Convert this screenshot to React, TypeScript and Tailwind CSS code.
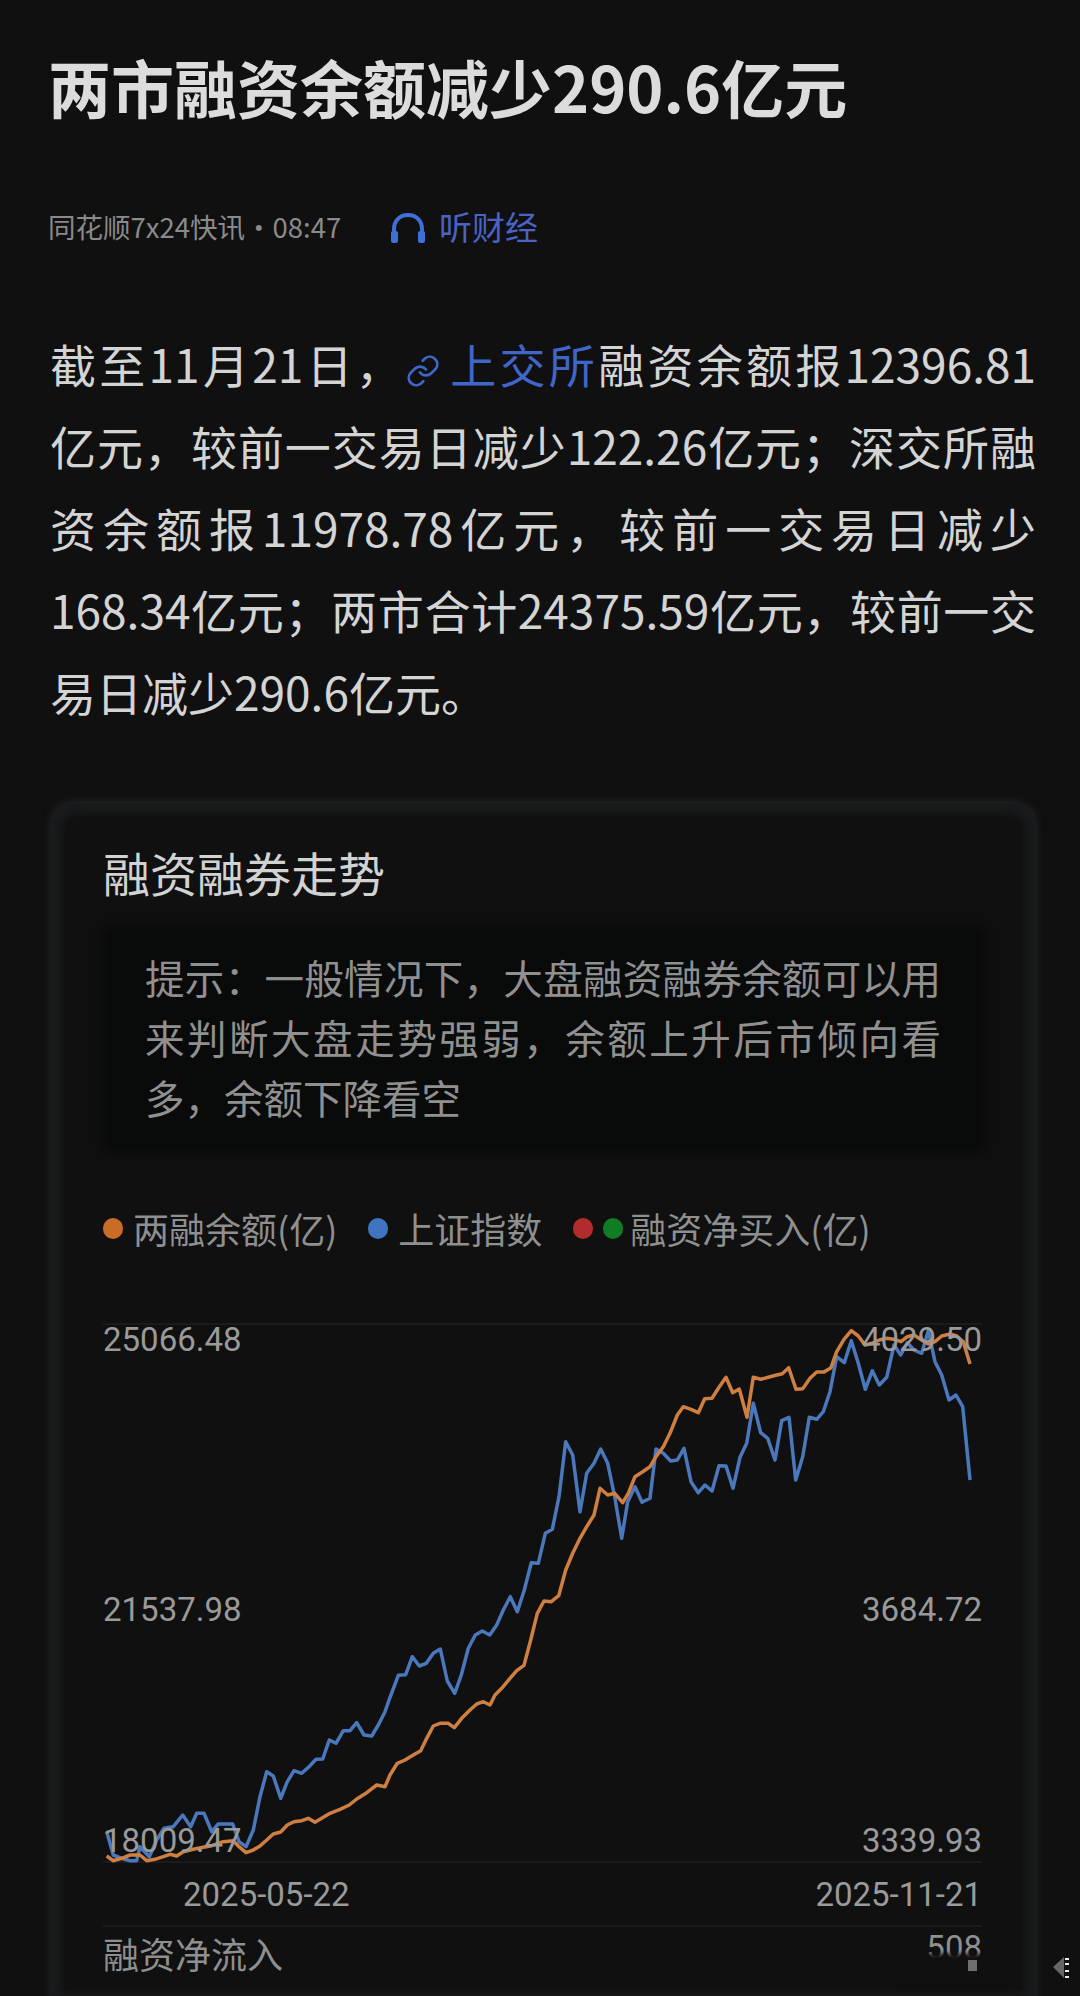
import React from 'react';

const sans = 'font-["Noto_Sans_CJK_SC","Noto_Sans",sans-serif]';

// traced from the picture: [x, y] in page pixels, relative to the plot (left 0 = 105, top 0 = 1323)
const toPoints = (raw: number[][], ox: number, oy: number) =>
  raw.map(([x, y]) => `${(ox + x / 3 - 105).toFixed(1)},${(oy + y / 3 - 1323).toFixed(1)}`);

const blue = [
  ...toPoints(
    [[50,545],[70,615],[95,625],[120,632],[140,632],[150,590],[178,620],[200,570],[222,535],[250,530],[278,495],[302,530],[320,490],[342,490],[365,545],[385,522],[408,522],[428,522],[447,575],[468,590],[490,540],[510,440],[530,365],[550,378],[572,445],[592,395],[612,362],[635,370],[657,350],[678,328],[698,327],[718,270],[738,280],[760,242],[780,242],[800,218],[822,255],[845,258],[865,225],[885,185]],
    90, 1650),
  ...toPoints(
    [[148,898],[175,826],[197,824],[217,770],[238,798],[259,790],[280,760],[301,747],[322,843],[344,880],[364,825],[385,745],[406,705],[427,693],[449,705],[470,675],[490,630],[511,590],[532,635],[553,570],[574,488],[595,490],[616,400],[637,388],[657,290],[677,125],[698,165],[720,335],[740,220],[762,190],[782,147],[803,190],[824,290]],
    340, 1400),
  ...toPoints(
    [[5,715],[23,605],[45,560],[66,607],[90,595],[108,447],[130,460],[152,483],[172,480],[192,445],[213,545],[235,578],[255,555],[276,573],[297,497],[318,498],[339,565],[360,472],[380,430],[400,310],[422,398],[443,415],[465,480],[485,362],[507,352],[527,540],[548,470],[568,352],[590,358],[610,335],[630,275],[650,170],[673,188],[694,122],[715,190],[736,268],[757,212],[778,255],[800,232],[822,135],[842,165],[862,128],[882,150],[905,160],[925,92],[945,185],[965,225],[987,300],[1008,285],[1028,320],[1050,540]],
    620, 1300),
].join(' ');

const orange = [
  ...toPoints(
    [[50,618],[70,632],[95,625],[120,615],[150,615],[170,632],[195,628],[220,620],[240,613],[260,618],[280,605],[310,598],[340,592],[365,587],[400,575],[430,572],[447,590],[468,608],[490,600],[510,588],[530,570],[550,552],[572,546],[592,525],[612,515],[635,512],[655,505],[675,517],[700,502],[720,490],[750,478],[778,465],[800,447],[830,428],[860,405],[885,410],[900,375]],
    90, 1650),
  ...toPoints(
    [[52,310],[75,300],[100,285],[122,272],[140,235],[160,198],[180,190],[205,190],[223,203],[245,175],[270,150],[290,132],[310,125],[330,135],[345,105],[365,85]],
    380, 1660),
  ...toPoints(
    [[510,835],[530,812],[552,796],[572,720],[592,640],[612,603],[634,605],[656,587],[677,510],[698,460],[720,415],[740,380],[762,345],[780,265],[803,285],[824,280]],
    340, 1400),
  ...toPoints(
    [[8,608],[25,580],[45,530],[68,515],[90,500],[108,470],[130,440],[150,400],[172,345],[190,320],[213,328],[235,338],[254,296],[276,295],[297,262],[318,232],[338,278],[358,267],[381,352],[400,232],[422,238],[445,232],[467,226],[487,221],[506,203],[528,268],[548,266],[570,235],[590,216],[612,216],[633,203],[650,155],[672,118],[694,92],[715,108],[735,135],[757,130],[778,120],[800,115],[822,118],[843,125],[862,110],[882,105],[905,120],[925,132],[945,125],[965,108],[990,102],[1010,108],[1030,125],[1050,192]],
    620, 1300),
].join(' ');

const LegendDot = ({ className }: { className: string }) => (
  <span className={`w-[20px] h-[21px] rounded-full ${className}`} />
);

const ChartLabel = ({ className, children }: { className: string; children: React.ReactNode }) => (
  <span className={`absolute font-['Roboto',sans-serif] text-[33px] leading-[38px] text-[#9a9a9a] ${className}`}>
    {children}
  </span>
);

const BodyLine = ({ children }: { children: React.ReactNode }) => (
  <span className="block text-justify [text-align-last:justify]">{children}</span>
);

const App = () => {
  return (
    <div className={`relative w-[1080px] h-[1996px] overflow-hidden bg-[#101011] ${sans}`}>
      <div className="pl-[48px] pr-[44px] pt-[47px]">
        <h1 className="text-[63px] leading-[78px] font-bold text-[#dcdcdc] whitespace-nowrap">两市融资余额减少290.6亿元</h1>

        <div className="flex items-center mt-[81px] h-[40px]">
          <span className="text-[27.5px] leading-[40px] text-[#8a8a8a] w-[342px] whitespace-nowrap">同花顺7x24快讯·08:47</span>
          <svg viewBox="0 0 36 32" className="w-[36px] h-[32px] mt-[4px]" fill="none">
            <path d="M4 27V17C4 8.500 10 3 18 3s14 5.500 14 14v10" stroke="#3f6fd8" strokeWidth="4" />
            <rect x="1" y="19" width="7" height="12" rx="2" fill="#3f6fd8" />
            <rect x="28" y="19" width="7" height="12" rx="2" fill="#3f6fd8" />
          </svg>
          <span className="ml-[13px] text-[33px] leading-[40px] text-[#4a63c4]">听财经</span>
        </div>

        <div className="mt-[76px] ml-[2px] w-[986px] text-[46px] leading-[82px] text-[#d4d4d4]">
          <BodyLine>
            截至11月21日，
            <svg viewBox="0 0 24 24" className="inline-block w-[36px] h-[36px] mr-[6px] align-[-6px]" fill="none" stroke="#3f66c8" strokeWidth="1.800" strokeLinecap="round" strokeLinejoin="round">
              <path d="M10 13a5 5 0 0 0 7.500 .5l3-3a5 5 0 0 0-7-7l-1.700 1.700" />
              <path d="M14 11a5 5 0 0 0-7.500-.5l-3 3a5 5 0 0 0 7 7l1.700-1.700" />
            </svg>
            <span className="text-[#3f66c8]">上交所</span>融资余额报12396.81
          </BodyLine>
          <BodyLine>亿元，较前一交易日减少122.26亿元；深交所融</BodyLine>
          <BodyLine>资余额报11978.78亿元，较前一交易日减少</BodyLine>
          <BodyLine>168.34亿元；两市合计24375.59亿元，较前一交</BodyLine>
          <span className="block">易日减少290.6亿元。</span>
        </div>

        <div className="mt-[69px] ml-[2px] w-[987px] h-[1210px] rounded-t-[24px] bg-[#1a1b1c] pt-[16px] px-[15px] shadow-[0_0_6px_2px_#1a1b1c]">
          <div className="rounded-t-[14px] bg-[#101011] h-[1173px] pl-[38px] pt-[23px] shadow-[0_0_8px_4px_#101011]">
            <h2 className="text-[47px] leading-[64px] text-[#d2d2d2]">融资融券走势</h2>

            <div className="mt-[26px] ml-[4px] w-[874px] h-[217px] bg-[#090a0a] pl-[38px] pr-[40px] pt-[17px] text-[39.5px] leading-[60px] text-[#909090] text-justify shadow-[0_0_10px_4px_#090a0a]">
              提示：一般情况下，大盘融资融券余额可以用来判断大盘走势强弱，余额上升后市倾向看多，余额下降看空
            </div>

            <div className="flex items-center mt-[59px] h-[44px] text-[36px] leading-[44px] text-[#8f8f8f] whitespace-nowrap">
              <LegendDot className="bg-[#c96c25]" />
              <span className="ml-[10px]">两融余额(亿)</span>
              <LegendDot className="bg-[#3f75c0] ml-[31px]" />
              <span className="ml-[10px]">上证指数</span>
              <LegendDot className="bg-[#b32c2c] ml-[31px]" />
              <LegendDot className="bg-[#0f7d24] ml-[10px]" />
              <span className="ml-[7px]">融资净买入(亿)</span>
            </div>

            <div className="relative mt-[73px] w-[879px] h-[540px] border-t-2 border-b-2 border-[#1a1b1c]">
              <svg viewBox="0 0 877 540" className="absolute left-[2px] -top-[2px] w-[877px] h-[540px]" fill="none" strokeLinejoin="round">
                <polyline points={blue} stroke="#4a78bd" strokeWidth="3.500" />
                <polyline points={orange} stroke="#cf7f3f" strokeWidth="3.500" />
              </svg>
              <ChartLabel className="left-0 top-[-4px]">25066.48</ChartLabel>
              <ChartLabel className="right-0 top-[-4px]">4029.50</ChartLabel>
              <ChartLabel className="left-0 top-[266px]">21537.98</ChartLabel>
              <ChartLabel className="right-0 top-[266px]">3684.72</ChartLabel>
              <ChartLabel className="left-0 top-[497px]">18009.47</ChartLabel>
              <ChartLabel className="right-0 top-[497px]">3339.93</ChartLabel>
            </div>

            <div className="flex justify-between h-[64px] w-[879px] pl-[80px] pt-[13px] border-b-2 border-[#1a1b1c] font-['Roboto',sans-serif] text-[33px] leading-[38px] text-[#9a9a9a]">
              <span>2025-05-22</span>
              <span>2025-11-21</span>
            </div>

            <div className="flex justify-between items-start w-[879px] pt-[4px] text-[36px] leading-[44px] text-[#8f8f8f]">
              <span>融资净流入</span>
              <span className="font-['Roboto',sans-serif] text-[33px] leading-[34px]">508</span>
            </div>
          </div>
        </div>
      </div>

      {/* watermark smudge over the bottom right corner */}
      <div className="absolute left-[900px] top-[1954px] w-[100px] h-[32px] bg-[#101011] blur-[2px]" />
      <div className="absolute left-[968px] top-[1960px] w-[9px] h-[11px] bg-[#6e6e6e]" />
      <svg viewBox="0 0 18 24" className="absolute left-[1052px] top-[1956px] w-[18px] h-[24px]" fill="none">
        <path d="M12 1 L1 11 L12 22 Z" fill="#666" />
        <path d="M13 3h4M13 8h4M13 15h4M13 21h4" stroke="#eee" strokeWidth="2" />
      </svg>
    </div>
  );
};

export default App;
